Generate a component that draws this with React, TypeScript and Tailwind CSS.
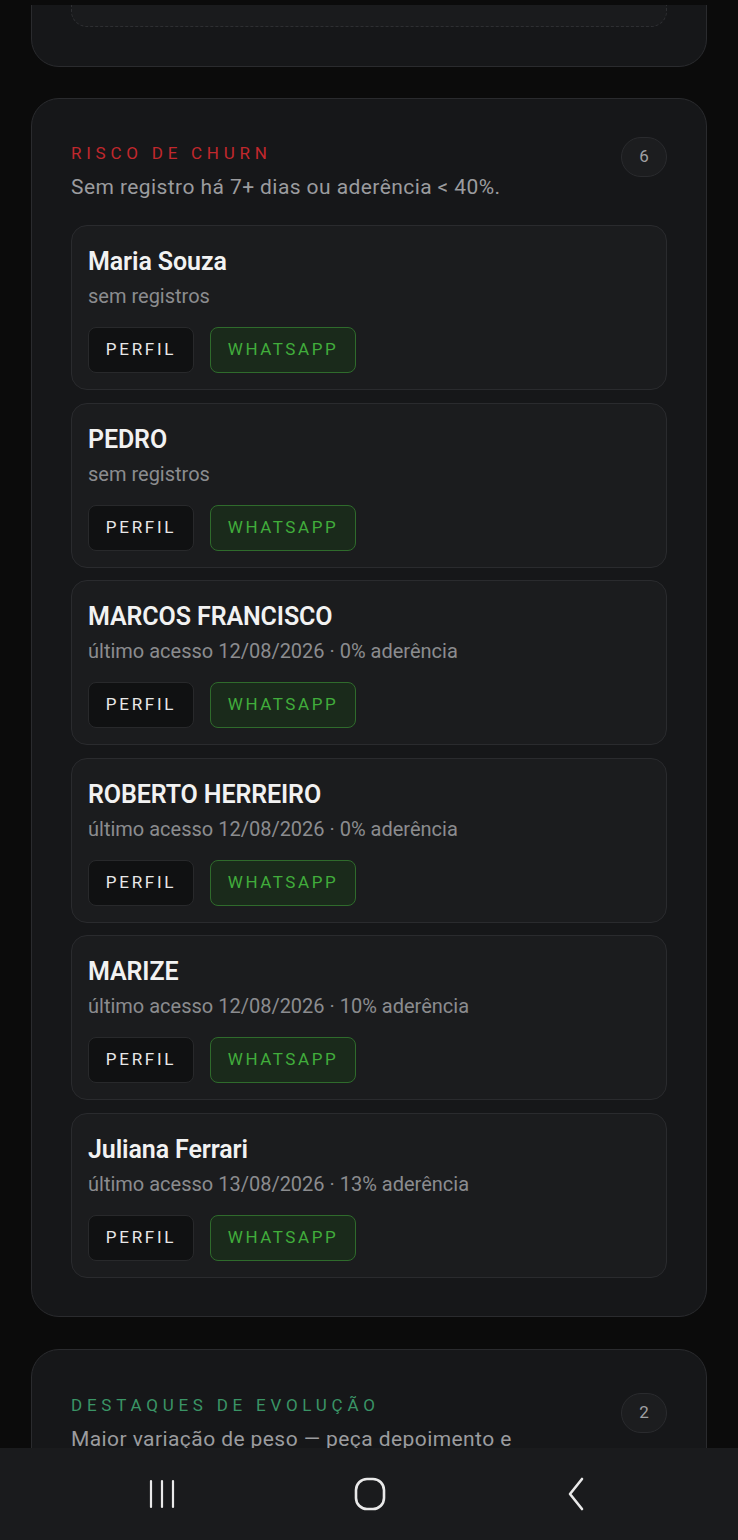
import React from 'react';

const churn = [
  { name: 'Maria Souza', info: 'sem registros' },
  { name: 'PEDRO', info: 'sem registros' },
  { name: 'MARCOS FRANCISCO', info: 'último acesso 12/08/2026 · 0% aderência' },
  { name: 'ROBERTO HERREIRO', info: 'último acesso 12/08/2026 · 0% aderência' },
  { name: 'MARIZE', info: 'último acesso 12/08/2026 · 10% aderência' },
  { name: 'Juliana Ferrari', info: 'último acesso 13/08/2026 · 13% aderência' },
];

const font = { fontFamily: 'Roboto, "Liberation Sans", sans-serif' };

const ClientRow: React.FC<{ name: string; info: string }> = ({ name, info }) => (
  <div className="rounded-2xl border border-[#2a2b2e] bg-[#1b1c1e] px-[16px] pt-[21px] pb-[16px]">
    <div className="text-[25px] leading-[30px] font-semibold text-[#f2f2f2] tracking-[-0.1px]">{name}</div>
    <div className="mt-[6px] text-[20px] leading-[26px] text-[#8b8c8f]">{info}</div>
    <div className="mt-[18px] flex gap-4">
      <button className="h-[46px] w-[106px] rounded-lg border border-[#28292b] bg-[#101112] text-[17px] tracking-[0.16em] text-[#e8e8e8]">
        PERFIL
      </button>
      <button className="h-[46px] w-[146px] rounded-lg border border-[#2f6b2c] bg-[#1a2a1b] text-[17px] tracking-[0.15em] text-[#41ad3b]">
        WHATSAPP
      </button>
    </div>
  </div>
);

const Badge: React.FC<{ n: number }> = ({ n }) => (
  <div className="flex h-[40px] w-[46px] items-center justify-center rounded-full border border-[#2a2b2e] bg-[#1c1d1f] text-[17px] text-[#a0a1a3]">
    {n}
  </div>
);

export default function App() {
  return (
    <div className="relative h-[1540px] overflow-hidden bg-[#0b0b0b]" style={font}>
      <div className="flex flex-col gap-8 px-[31px]">
        {/* previous section, scrolled out */}
        <div className="mt-[-141px] rounded-[28px] border border-[#2a2b2e] bg-[#161719] px-[39px] pt-[40px] pb-[39px]">
          <div className="h-[127px] rounded-2xl border border-dashed border-[#2e2f32] bg-[#1a1b1d]" />
        </div>

        <div className="mt-[-1px] rounded-[28px] border border-[#2a2b2e] bg-[#161719] px-[39px] pt-[42px] pb-[38px]">
          <div className="flex items-start justify-between">
            <div>
              <div className="text-[17px] leading-[24px] tracking-[0.28em] text-[#c1282d]">RISCO DE CHURN</div>
              <div className="mt-[8px] text-[21px] leading-[28px] tracking-[0.02em] text-[#9b9c9f]">
                Sem registro há 7+ dias ou aderência &lt; 40%.
              </div>
            </div>
            <div className="mt-[-4px]">
              <Badge n={6} />
            </div>
          </div>
          <div className="mt-[24px] flex flex-col gap-[12.5px]">
            {churn.map((c) => (
              <ClientRow key={c.name} name={c.name} info={c.info} />
            ))}
          </div>
        </div>

        <div className="rounded-[28px] border border-[#2a2b2e] bg-[#161719] px-[39px] pt-[43px] pb-[120px]">
          <div className="flex items-start justify-between">
            <div>
              <div className="text-[17px] leading-[24px] tracking-[0.28em] text-[#3a9466]">DESTAQUES DE EVOLUÇÃO</div>
              <div className="mt-[8px] text-[21px] leading-[28px] tracking-[0.02em] text-[#9b9c9f]">
                Maior variação de peso — peça depoimento e
              </div>
            </div>
            <Badge n={2} />
          </div>
        </div>
      </div>

      {/* status strip */}
      <div className="absolute left-0 right-0 top-0 h-[5px] bg-[#0b0b0b]" />

      {/* android nav bar */}
      <div className="absolute bottom-0 left-0 right-0 flex h-[92px] items-center justify-center gap-[172px] bg-[#1a1b1d]">
        <svg width="34" height="34" viewBox="0 0 34 34" className="mr-[2px]">
          <g stroke="#e9e9e9" strokeWidth="2.2" strokeLinecap="round">
            <line x1="6" y1="4" x2="6" y2="30" />
            <line x1="17" y1="4" x2="17" y2="30" />
            <line x1="28" y1="4" x2="28" y2="30" />
          </g>
        </svg>
        <svg width="34" height="34" viewBox="0 0 34 34">
          <rect x="3" y="2" width="28" height="30" rx="11" fill="none" stroke="#e9e9e9" strokeWidth="2.6" />
        </svg>
        <svg width="34" height="34" viewBox="0 0 34 34">
          <polyline points="23,2 11,17 23,32" fill="none" stroke="#e9e9e9" strokeWidth="2.6" strokeLinecap="round" strokeLinejoin="round" />
        </svg>
      </div>
    </div>
  );
}
